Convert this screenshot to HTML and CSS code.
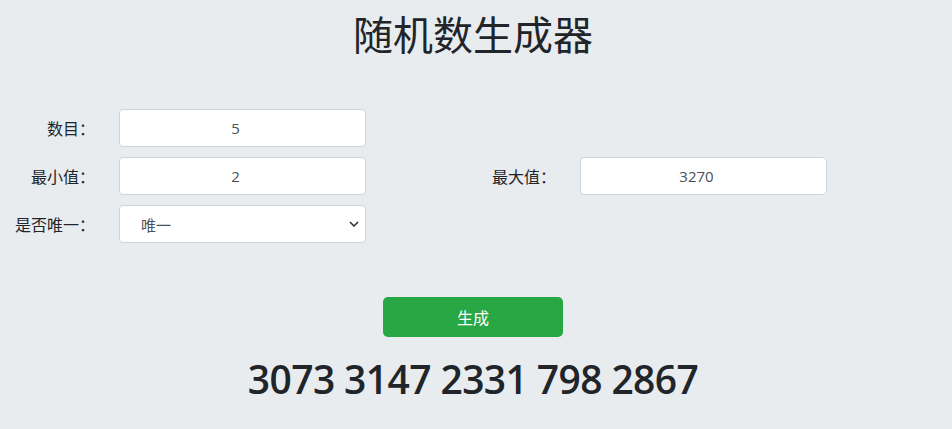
FILE: index.html
```html
<!DOCTYPE html>
<html lang="zh-CN">
<head>
<meta charset="utf-8">
<title>随机数生成器</title>
<link rel="stylesheet" href="styles.css">
</head>
<body>
<div class="page">
  <h1 class="title">随机数生成器</h1>
  <div class="form">
    <label class="label">数目：</label>
    <input class="field num" type="text" value="5">
    <span></span><span></span>
    <label class="label">最小值：</label>
    <input class="field num" type="text" value="2">
    <label class="label">最大值：</label>
    <input class="field num" type="text" value="3270">
    <label class="label">是否唯一：</label>
    <select class="field select">
      <option>唯一</option>
      <option>不唯一</option>
    </select>
  </div>
  <div class="actions">
    <button class="btn" type="button">生成</button>
  </div>
  <div class="result">3073 3147 2331 798 2867</div>
</div>
</body>
</html>
```
FILE: styles.css
```css
html, body {
  margin: 0;
  padding: 0;
  background: #e9ecef;
}
body {
  font-family: "Open Sans", "Noto Sans CJK SC", sans-serif;
  color: #212529;
}
.page {
  width: 946px;
}
.title {
  margin: 9px 0 0;
  font-family: "Noto Sans CJK SC", sans-serif;
  font-size: 40px;
  font-weight: 400;
  line-height: 48px;
  text-align: center;
}
.form {
  margin-top: 52px;
  display: grid;
  grid-template-columns: 95px 247px 166px 247px;
  grid-auto-rows: 38px;
  column-gap: 24px;
  row-gap: 10px;
  align-items: center;
}
.label {
  text-align: right;
  font-family: "Noto Sans CJK SC", sans-serif;
  font-size: 16px;
  line-height: 24px;
  white-space: nowrap;
}
.field {
  box-sizing: border-box;
  width: 247px;
  height: 38px;
  margin: 0;
  border: 1px solid #ced4da;
  border-radius: 4px;
  background: #fff;
  font-family: "Open Sans", "Noto Sans CJK SC", sans-serif;
  font-size: 15px;
  color: #495057;
  text-align: center;
  padding: 0 12px;
  outline: none;
}
.num {
  padding: 0 26px 0 12px;
}
.select {
  appearance: none;
  -webkit-appearance: none;
  text-align: left;
  padding-left: 21px;
  font-family: "Noto Sans CJK SC", sans-serif;
  background-image: url("data:image/svg+xml;utf8,<svg xmlns='http://www.w3.org/2000/svg' width='10' height='6' viewBox='0 0 10 6'><path d='M1 1l4 4 4-4' fill='none' stroke='%23333' stroke-width='1.6'/></svg>");
  background-repeat: no-repeat;
  background-position: right 6px center;
}
.actions {
  margin-top: 54px;
  display: flex;
  justify-content: center;
}
.btn {
  width: 180px;
  height: 40px;
  border: 0;
  border-radius: 5px;
  background: #28a745;
  color: #fff;
  font-family: "Noto Sans CJK SC", sans-serif;
  font-size: 16px;
  cursor: pointer;
}
.result {
  margin-top: 14px;
  padding: 4px 0;
  text-align: center;
  font-family: "Open Sans", sans-serif;
  font-weight: 600;
  font-size: 39px;
  letter-spacing: -0.6px;
  line-height: 48px;
  color: #212529;
}
```
